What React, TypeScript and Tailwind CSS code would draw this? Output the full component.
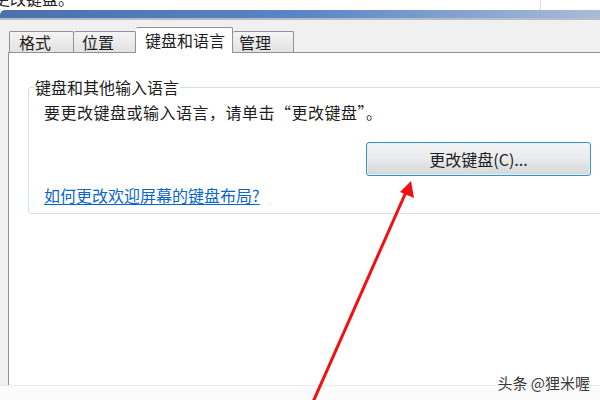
export default function App() {
  const font = { fontFamily: '"Noto Sans CJK SC", "Noto Sans", sans-serif' };

  return (
    <div
      className="relative w-[600px] h-[400px] overflow-hidden bg-white text-[#1e1e1e]"
      style={font}
    >
      {/* strip of the window above, cut off */}
      <div className="relative h-[10px] bg-white overflow-hidden">
        <div className="absolute left-[-6px] top-[-12px] text-[16px] leading-[20px] text-[#222]">
          更改键盘。
        </div>
        <div className="absolute left-[540px] top-0 h-[10px] border-l border-[#d8d8d8]" />
      </div>

      {/* title bar edge */}
      <div className="h-[8px] rounded-tl-[5px] bg-gradient-to-r from-[#4b70ad] via-[#5985c6] to-[#a9bcd8]" />
      <div className="h-[2px] bg-[#b5bcc6]" />

      <div className="flex h-[380px]">
        {/* window frame */}
        <div className="w-[3px] bg-[#8199c2]" />
        <div className="flex-1 flex flex-col bg-[#f0f0f0] pl-[8px]">
          {/* tabs */}
          <div className="flex items-end h-[32px] pl-[1px]">
            <div className="w-[65px] h-[21px] pl-[9px] border border-b-0 border-[#8e9199] rounded-t-[2px] bg-gradient-to-b from-[#f4f4f4] to-[#e2e2e2] text-[16px] leading-[20px]">
              格式
            </div>
            <div className="w-[62px] h-[21px] pl-[8px] border border-b-0 border-l-0 border-[#8e9199] rounded-t-[2px] bg-gradient-to-b from-[#f4f4f4] to-[#e2e2e2] text-[16px] leading-[20px]">
              位置
            </div>
            <div className="relative -mb-[1px] w-[97px] h-[26px] pl-[9px] pt-[2px] border border-b-0 border-l-0 border-[#8e9199] rounded-t-[2px] bg-white text-[16px] leading-[20px]">
              键盘和语言
            </div>
            <div className="w-[61px] h-[21px] pl-[6px] border border-b-0 border-l-0 border-[#8e9199] rounded-t-[2px] bg-gradient-to-b from-[#f4f4f4] to-[#e2e2e2] text-[16px] leading-[20px]">
              管理
            </div>
          </div>

          {/* tab panel */}
          <div className="flex-1 border-l border-t border-[#8e9199] bg-white pl-[19px] pt-[24px]">
            <fieldset className="w-[590px] border border-[#d5dfe5] rounded-[3px] pb-[8px]">
              <legend className="ml-[5px] px-[1px] text-[16px] leading-[20px] text-[#1e1e1e]">
                键盘和其他输入语言
              </legend>
              <p className="mt-[5px] pl-[15px] text-[16px] leading-[20px] tracking-[0.5px]">
                要更改键盘或输入语言，请单击“更改键盘”。
              </p>
              <div className="mt-[20px] pl-[337px]">
                <button className="w-[225px] h-[34px] rounded-[3px] border border-[#3c8fc0] bg-gradient-to-b from-[#f3f4f5] via-[#e9eaeb] to-[#d5d6d7] shadow-[inset_0_0_0_1px_#e4f3fb] text-[16px] leading-[20px] text-[#1e1e1e]">
                  更改键盘(C)...
                </button>
              </div>
              <a className="block mt-[9px] ml-[15px] w-fit text-[16px] leading-[20px] text-[#0a66cc] underline underline-offset-2">
                如何更改欢迎屏幕的键盘布局?
              </a>
            </fieldset>
          </div>
          <div className="h-[15px] -ml-[8px] bg-[#fbfbfb] border-t border-[#ececec]" />
        </div>
      </div>

      {/* red arrow annotation */}
      <svg className="absolute left-0 top-0" width="600" height="400" viewBox="0 0 600 400">
        <line x1="313" y1="402" x2="406" y2="192" stroke="#f01010" strokeWidth="3" />
        <polygon points="411,181 414,198 400,192" fill="#f01010" />
      </svg>

      {/* watermark */}
      <div className="absolute right-[10px] bottom-[8px] text-[15px] leading-[18px] text-[#3a3a3a] [text-shadow:0_0_2px_#fff]">
        头条 @狸米喔
      </div>
    </div>
  );
}
